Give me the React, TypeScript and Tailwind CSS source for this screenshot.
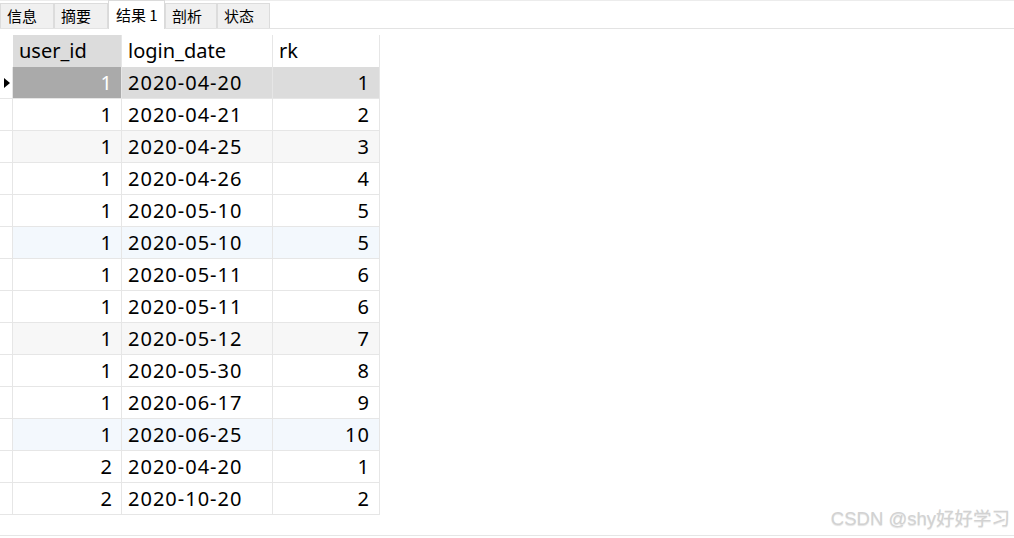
import React from "react";

const rows = [
  { id: 1, date: "2020-04-20", rk: 1 },
  { id: 1, date: "2020-04-21", rk: 2 },
  { id: 1, date: "2020-04-25", rk: 3 },
  { id: 1, date: "2020-04-26", rk: 4 },
  { id: 1, date: "2020-05-10", rk: 5 },
  { id: 1, date: "2020-05-10", rk: 5 },
  { id: 1, date: "2020-05-11", rk: 6 },
  { id: 1, date: "2020-05-11", rk: 6 },
  { id: 1, date: "2020-05-12", rk: 7 },
  { id: 1, date: "2020-05-30", rk: 8 },
  { id: 1, date: "2020-06-17", rk: 9 },
  { id: 1, date: "2020-06-25", rk: 10 },
  { id: 2, date: "2020-04-20", rk: 1 },
  { id: 2, date: "2020-10-20", rk: 2 },
];

const tabs = [
  { label: "信息", w: "w-[54px]" },
  { label: "摘要", w: "w-[54px]" },
  { label: "结果 1", w: "w-[57px]" },
  { label: "剖析", w: "w-[52px]" },
  { label: "状态", w: "w-[53px]" },
];

// background for the non-selected rows, as seen in the screenshot
const rowBg = (i: number) => {
  if (i % 3 === 2) return i % 6 === 5 ? "bg-[#f3f8fd]" : "bg-[#f7f7f7]";
  return "bg-white";
};

const App = () => {
  return (
    <div className="w-[1014px] h-[538px] bg-white relative overflow-hidden font-['Noto_Sans','Noto_Sans_CJK_SC',sans-serif] text-black">
      {/* Tabs */}
      <div className="h-[29px] border-t border-[#ececec] border-b border-b-[#e3e3e3] flex items-end">
        {tabs.map((t, i) =>
          i === 2 ? (
            <div
              key={t.label}
              className={`${t.w} h-[29px] -mb-px pl-[7px] bg-white border border-b-0 border-[#dadada] flex items-center text-[15px] font-['Noto_Sans_CJK_SC',sans-serif]`}
            >
              {t.label}
            </div>
          ) : (
            <div
              key={t.label}
              className={`${t.w} h-[25px] pl-[6px] bg-[#f0f0f0] border border-b-0 border-[#dcdcdc] flex items-center text-[15px] font-['Noto_Sans_CJK_SC',sans-serif]`}
            >
              {t.label}
            </div>
          )
        )}
      </div>

      {/* Grid */}
      <div className="mt-[6px] text-[20px]">
        <div className="flex h-[32px]">
          <div className="w-[13px]" />
          <div className="w-[109px] bg-[#dcdcdc] border-r border-[#e6e6e6] flex items-center pl-[6px]">
            user_id
          </div>
          <div className="w-[151px] border-r border-[#e6e6e6] flex items-center pl-[6px]">
            login_date
          </div>
          <div className="w-[107px] border-r border-[#e6e6e6] flex items-center pl-[6px]">
            rk
          </div>
        </div>
        {rows.map((r, i) => {
          const sel = i === 0;
          const bg = sel ? "bg-[#dcdcdc]" : rowBg(i);
          return (
            <div key={i} className="flex h-[32px]">
              <div className="w-[13px] border-r border-b border-[#e6e6e6] flex items-center pl-[4px]">
                {sel && (
                  <div className="w-0 h-0 border-t-[5px] border-b-[5px] border-l-[6px] border-t-transparent border-b-transparent border-l-black" />
                )}
              </div>
              <div
                className={`w-[109px] border-r border-b border-[#e6e6e6] flex items-center justify-end pr-[9px] ${
                  sel ? "bg-[#aaaaaa] text-white" : bg
                }`}
              >
                {r.id}
              </div>
              <div
                className={`w-[151px] border-r border-b border-[#e6e6e6] flex items-center pl-[6px] tracking-[1px] ${bg}`}
              >
                {r.date}
              </div>
              <div
                className={`w-[107px] border-r border-b border-[#e6e6e6] flex items-center justify-end pr-[9px] tracking-[1px] ${bg}`}
              >
                {r.rk}
              </div>
            </div>
          );
        })}
      </div>

      {/* bottom line */}
      <div className="absolute left-0 right-0 bottom-[2px] border-t border-[#e6e6e6]" />

      {/* watermark */}
      <div className="absolute right-[4px] bottom-[5px] text-[18.5px] text-[#d2d2d2] [text-shadow:0_1px_1px_rgba(0,0,0,0.12)] font-['Liberation_Sans','Noto_Sans_CJK_SC',sans-serif]">
        CSDN @shy好好学习
      </div>
    </div>
  );
};

export default App;
